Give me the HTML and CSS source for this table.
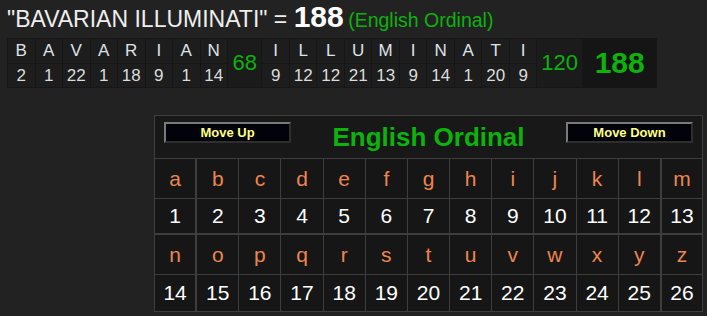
FILE: index.html
```html
<!DOCTYPE html>
<html>
<head>
<meta charset="utf-8">
<link rel="stylesheet" href="styles.css">
</head>
<body>
<div class="title"><span class="phrase">"BAVARIAN ILLUMINATI" = </span><span class="total">188</span> <span class="cipher">(English Ordinal)</span></div>

<div class="breakdown">
  <div class="l">B</div><div class="l">A</div><div class="l">V</div><div class="l">A</div><div class="l">R</div><div class="l">I</div><div class="l">A</div><div class="l">N</div>
  <div class="word-sum s1">68</div>
  <div class="l">I</div><div class="l">L</div><div class="l">L</div><div class="l">U</div><div class="l">M</div><div class="l">I</div><div class="l">N</div><div class="l">A</div><div class="l">T</div><div class="l">I</div>
  <div class="word-sum s2">120</div>
  <div class="grand">188</div>
  <div class="n">2</div><div class="n">1</div><div class="n">22</div><div class="n">1</div><div class="n">18</div><div class="n">9</div><div class="n">1</div><div class="n">14</div>
  <div class="n">9</div><div class="n">12</div><div class="n">12</div><div class="n">21</div><div class="n">13</div><div class="n">9</div><div class="n">14</div><div class="n">1</div><div class="n">20</div><div class="n">9</div>
</div>

<div class="panel-wrap">
  <div class="cipher-table">
    <div class="head">
      <div class="btn">Move Up</div>
      <div class="head-title">English Ordinal</div>
      <div class="btn">Move Down</div>
    </div>
    <div class="ch">a</div><div class="ch">b</div><div class="ch">c</div><div class="ch">d</div><div class="ch">e</div><div class="ch">f</div><div class="ch">g</div><div class="ch">h</div><div class="ch">i</div><div class="ch">j</div><div class="ch">k</div><div class="ch">l</div><div class="ch">m</div>
    <div class="num top-half">1</div><div class="num top-half">2</div><div class="num top-half">3</div><div class="num top-half">4</div><div class="num top-half">5</div><div class="num top-half">6</div><div class="num top-half">7</div><div class="num top-half">8</div><div class="num top-half">9</div><div class="num top-half">10</div><div class="num top-half">11</div><div class="num top-half">12</div><div class="num top-half">13</div>
    <div class="ch">n</div><div class="ch">o</div><div class="ch">p</div><div class="ch">q</div><div class="ch">r</div><div class="ch">s</div><div class="ch">t</div><div class="ch">u</div><div class="ch">v</div><div class="ch">w</div><div class="ch">x</div><div class="ch">y</div><div class="ch">z</div>
    <div class="num">14</div><div class="num">15</div><div class="num">16</div><div class="num">17</div><div class="num">18</div><div class="num">19</div><div class="num">20</div><div class="num">21</div><div class="num">22</div><div class="num">23</div><div class="num">24</div><div class="num">25</div><div class="num">26</div>
  </div>
</div>
</body>
</html>
```

FILE: styles.css
```css
html, body {
  margin: 0;
  padding: 0;
  background: #222222;
}
body {
  font-family: "Liberation Sans", Arial, sans-serif;
  padding: 2px 0 0 7px;
  width: 700px;
  height: 314px;
  overflow: hidden;
}
.title {
  height: 36px;
  line-height: 30px;
  white-space: nowrap;
  color: #eeeeee;
}
.phrase {
  font-size: 23px;
}
.total {
  font-size: 30px;
  font-weight: bold;
  color: #ffffff;
}
.cipher {
  font-size: 19.5px;
  color: #0db20d;
}
.breakdown {
  display: grid;
  grid-template-columns: repeat(8, 26.5px) 33.4px repeat(10, 26.5px) 44.6px 73.4px;
  grid-template-rows: 24px 23px;
  gap: 1px;
  padding: 1px;
  width: max-content;
  background: #161616;
}
.breakdown > div {
  background: #1d1d1d;
  display: flex;
  align-items: center;
  justify-content: center;
  font-size: 17px;
  color: #dcdcdc;
}
.breakdown .l {
  color: #dde3ea;
}
.breakdown .word-sum {
  grid-row: 1 / 3;
  font-size: 22px;
  color: #0db20d;
  background: #1b1b1b;
}
.breakdown .s1 { grid-column: 9; }
.breakdown .s2 { grid-column: 20; }
.breakdown .grand {
  grid-row: 1 / 3;
  grid-column: 21;
  font-size: 30px;
  font-weight: bold;
  color: #0db20d;
  background: #151515;
}
.panel-wrap {
  display: flex;
  padding-left: 147px;
  margin-top: 27px;
}
.cipher-table {
  display: grid;
  grid-template-columns: repeat(13, 1fr);
  grid-template-rows: 42px 39px 35px 39px 36px;
  gap: 1px;
  width: 547px;
  border: 1px solid #3e3e3e;
  background: #3e3e3e;
}
.head {
  grid-column: 1 / -1;
  background: #181818;
  display: flex;
  justify-content: space-between;
  align-items: flex-start;
  padding: 6px 9px 0 9px;
}
.btn {
  width: 123px;
  height: 17px;
  border-style: solid;
  border-width: 2px;
  border-color: #7a7a7a #2e2e2e #2e2e2e #7a7a7a;
  background: #02020a;
  color: #ffff88;
  font-size: 13px;
  font-weight: bold;
  line-height: 17px;
  text-align: center;
}
.head-title {
  align-self: center;
  margin-top: -6px;
  font-size: 26px;
  font-weight: bold;
  color: #0db20d;
}
.ch, .num {
  background: #161616;
  display: flex;
  align-items: center;
  justify-content: center;
  font-size: 21px;
}
.ch {
  color: #ee8550;
}
.num {
  color: #ffffff;
}
.cipher-table > :nth-child(13n+2) {
  border-right: 1px solid #3e3e3e;
}
.cipher-table > :nth-child(13n+1):not(.head) {
  border-left: 1px solid #3e3e3e;
}
.cipher-table > .top-half {
  border-bottom: 1px solid #3e3e3e;
}
```
